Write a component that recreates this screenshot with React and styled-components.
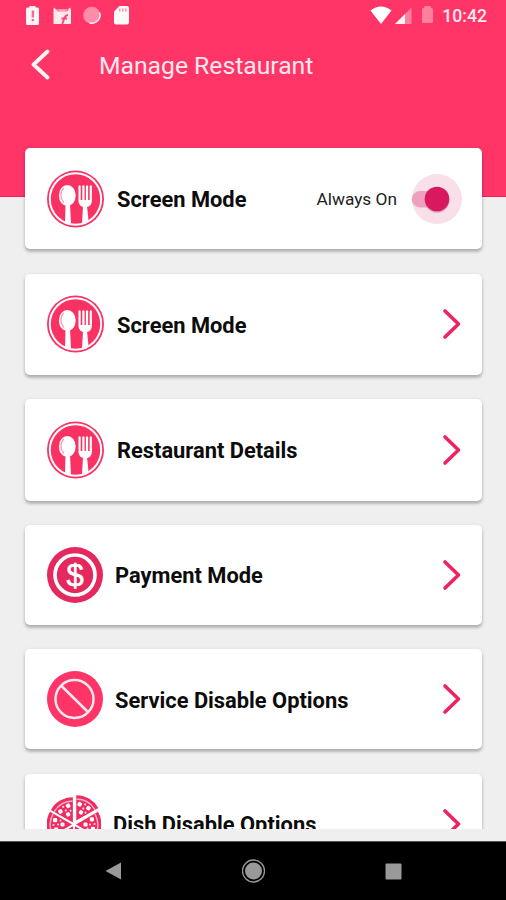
import React from "react";
import styled, { createGlobalStyle } from "styled-components";

let GlobalStyle = createGlobalStyle`
  * {
    box-sizing: border-box;
  }

  body {
    margin: 0;
    background: #efefef;
    font-family: Roboto, sans-serif;
  }

  svg {
    display: block;
    flex: none;
  }
`;

let Screen = styled.div`
  display: flex;
  flex-direction: column;
  height: 900px;
  overflow: hidden;
  background: #efefef;
`;

let Header = styled.header`
  flex: none;
  height: 197px;
  background: #ff3467;
  border-bottom: 1px solid #f21f58;
  color: #fff;
`;

let StatusBar = styled.div`
  display: flex;
  align-items: center;
  justify-content: space-between;
  height: 32px;
  padding: 0 19px 0 25px;
`;

let StatusGroup = styled.div`
  display: flex;
  align-items: center;
  gap: 6px;
`;

let Clock = styled.span`
  margin-left: 1px;
  font-size: 17.6px;
  font-weight: 500;
  line-height: 32px;
  color: #ffe9ef;
`;

let Toolbar = styled.div`
  display: flex;
  align-items: center;
  height: 66px;
  padding-left: 30px;
`;

let PageTitle = styled.h1`
  margin: 2px 0 0 48px;
  font-size: 24.7px;
  font-weight: 400;
  line-height: 30px;
  color: #ffe9ef;
`;

let List = styled.main`
  flex: none;
  height: 691px;
  margin-top: -59px;
  padding: 10px 24px 0 25px;
  overflow: hidden;
`;

let Card = styled.section`
  display: flex;
  align-items: center;
  height: ${p => p.$height}px;
  margin-bottom: 24.5px;
  padding: 0 20px 0 22px;
  border-radius: 5px;
  background: #fff;
  box-shadow: 0 3px 3px rgba(0, 0, 0, 0.2), 0 1px 4px rgba(0, 0, 0, 0.12);
`;

let Label = styled.h2`
  flex: 1;
  margin: 3px 0 0 12px;
  font-size: 21.85px;
  font-weight: 700;
  line-height: 28px;
  white-space: nowrap;
  color: #0c0c0c;
`;

let SwitchLabel = styled.span`
  margin: 1px 14px 0 0;
  font-size: 17.3px;
  line-height: 24px;
  color: #222;
`;

let NavBar = styled.nav`
  display: flex;
  align-items: center;
  justify-content: space-between;
  flex: none;
  height: 59px;
  margin-top: 12px;
  padding: 0 104px 0 105px;
  border-top: 1px solid #555;
  background: #000;
`;

function StatusIcons() {
  return (
    <svg width="106" height="22" viewBox="25 5 106 22">
      <path
        d="M29.5 7.5V6h6v1.500h2q1.500 0 1.500 1.500v14.500q0 1.500-1.500 1.500h-10q-1.500 0-1.500-1.500V9q0-1.500 1.500-1.500z"
        fill="#fff5f5"
      />
      <path d="M31.700 10.500h2.300v7h-2.300zM31.700 19h2.300v2.300h-2.300z" fill="#ff6689" />
      <path d="M54 7.500l2 2h12l2-2 1 2V24H53.500V9z" fill="#ffeaee" />
      <path
        d="M57 9q0 2 3 2h5q3 0 3-2"
        fill="none"
        stroke="#ff6f92"
        strokeWidth="1.200"
      />
      <path
        d="M62 24c2-2 1.500-9 6-9M61.500 18.500h5.500"
        fill="none"
        stroke="#ff4775"
        strokeWidth="2"
      />
      <circle cx="91.700" cy="15.200" r="8.500" fill="#ff8ca8" />
      <path
        d="M99.500 12.500a8 8 0 0 1-10 10.300"
        fill="none"
        stroke="#fff0f2"
        strokeWidth="1.500"
      />
      <path d="M119.500 6H127q2 0 2 2v14.500q0 2-2 2h-11q-2 0-2-2V11.500z" fill="#fffafa" />
      <path d="M119.800 8.500v3M122.800 8.500v3M125.800 8.500v3" stroke="#ff7d98" strokeWidth="1.300" />
    </svg>
  );
}

function SignalIcons() {
  return (
    <svg width="65" height="22" viewBox="371 5 65 22">
      <path d="M371.500 10.500Q382 2.500 392.500 10.500L382 24z" fill="#fff" />
      <path d="M412.500 7.500V24H396z" fill="#ff7f9e" />
      <path d="M406 14v10h-10z" fill="#fff3f0" />
      <path
        d="M425.500 7.500V6h6v1.500q2.500 0 2.500 2v12q0 1.500-1.500 1.500h-8q-1.500 0-1.500-1.500v-12q0-2 2.500-2z"
        fill="#ff819f"
      />
    </svg>
  );
}

function BackIcon() {
  return (
    <svg width="21" height="32" viewBox="30.500 49 21 32">
      <path
        d="M48 51.500L34 64.500L48 77.500"
        fill="none"
        stroke="#fff5f3"
        strokeWidth="3.800"
        strokeLinecap="round"
        strokeLinejoin="round"
      />
    </svg>
  );
}

function CutleryIcon() {
  return (
    <svg width="58" height="58" viewBox="0.500 0 58 58">
      <circle cx="29" cy="29" r="28.500" fill="#f93263" />
      <circle cx="29" cy="29" r="25.700" fill="none" stroke="#fff" strokeWidth="2" />
      <ellipse cx="20.800" cy="25.500" rx="8.400" ry="10.500" fill="#fff" />
      <path d="M19 34h4.500l1 19.500h-6zM36.500 36h4l1.500 14.500-6.500 3z" fill="#fff" />
      <path
        d="M32 16V31q0 5.500 6.700 6.500q6.700-1 6.700-6.500V16q-1.100-1.500-2.200 0V30h-1.600V16q-1.100-1.500-2.200 0V30h-1.400V16q-1.100-1.500-2.200 0V30h-1.600V16q-1.100-1.500-2.200 0z"
        fill="#fff"
      />
      <path d="M17.500 18q-3 2.500-3 7.500q0 4 3 7" fill="none" stroke="#ff9cb3" strokeWidth="1.300" />
    </svg>
  );
}

let DollarText = styled.text`
  font-family: "Liberation Sans", sans-serif;
  font-size: 31px;
  text-anchor: middle;
`;

function DollarIcon() {
  return (
    <svg width="56" height="56" viewBox="0 0 56 56">
      <circle cx="28" cy="28" r="28" fill="#e5285e" />
      <circle cx="28" cy="28" r="20" fill="none" stroke="#fff" strokeWidth="3.600" />
      <DollarText x="28" y="38.500" fill="#fff" stroke="#fff" strokeWidth="0.6">
        $
      </DollarText>
    </svg>
  );
}

function DisableIcon() {
  return (
    <svg width="56" height="56" viewBox="0 0 56 56">
      <circle cx="28" cy="28" r="28" fill="#ff3467" />
      <circle cx="27.500" cy="28" r="19" fill="none" stroke="#ffe9f0" strokeWidth="2.500" />
      <path d="M14.500 15L41 41" stroke="#ffe9f0" strokeWidth="2.500" />
    </svg>
  );
}

// each slice points right from the centre and is turned into place
function Slice(props) {
  return (
    <g transform={`rotate(${props.angle}) translate(${props.offset} 0)`}>
      <path d="M0 0L22 -12.700A25.400 25.400 0 0 1 22 12.700Z" fill="#ee2c62" />
      <path d="M18.900 -10.600A21.700 21.700 0 0 1 18.900 10.600" fill="none" stroke="#ffb3c6" strokeWidth="1.400" />
      <rect x="13.800" y="-7.300" width="4.200" height="4.200" rx="1.300" fill="#fff" />
      <rect x="14.800" y="2.200" width="4.200" height="4.200" rx="1.300" fill="#fff" />
      <rect x="7.500" y="-2" width="4" height="4" rx="1.300" fill="#fff" />
      <circle cx="14" cy="0" r="1.100" fill="#ffd2dd" />
      <circle cx="18.500" cy="-0.500" r="1.100" fill="#ffd2dd" />
      <circle cx="11.500" cy="4" r="1" fill="#ffd2dd" />
    </g>
  );
}

function PizzaIcon() {
  return (
    <svg width="54" height="58" viewBox="-27 -29.500 54 58">
      <Slice angle={-120} offset={2.2} />
      <Slice angle={-60} offset={4.5} />
      <Slice angle={0} offset={2} />
      <Slice angle={60} offset={2} />
      <Slice angle={120} offset={2} />
      <Slice angle={180} offset={2} />
    </svg>
  );
}

function Chevron() {
  return (
    <svg width="20" height="32" viewBox="0 0 20 32">
      <path
        d="M3 3L16.500 16L3 29"
        fill="none"
        stroke="#ee2361"
        strokeWidth="3.600"
        strokeLinecap="round"
        strokeLinejoin="round"
      />
    </svg>
  );
}

function Toggle() {
  return (
    <svg width="51" height="50" viewBox="0 0 51 50">
      <circle cx="26" cy="25" r="25" fill="#f8dfe9" />
      <path d="M26 17H9a8 8 0 0 0 0 16.500h17z" fill="#efa0bf" />
      <circle cx="26" cy="26.500" r="12.300" fill="#bd829a" opacity="0.55" />
      <circle cx="26" cy="25" r="12.300" fill="#d8195f" />
    </svg>
  );
}

let rows = [
  { label: "Screen Mode", icon: CutleryIcon, height: 101, toggle: "Always On" },
  { label: "Screen Mode", icon: CutleryIcon, height: 101 },
  { label: "Restaurant Details", icon: CutleryIcon, height: 101.5 },
  { label: "Payment Mode", icon: DollarIcon, height: 99.5 },
  { label: "Service Disable Options", icon: DisableIcon, height: 100 },
  { label: "Dish Disable Options", icon: PizzaIcon, height: 100 }
];

function MenuRow(props) {
  let Icon = props.icon;

  return (
    <Card $height={props.height}>
      <Icon />
      <Label>{props.label}</Label>
      {props.toggle && <SwitchLabel>{props.toggle}</SwitchLabel>}
      {props.toggle ? <Toggle /> : <Chevron />}
    </Card>
  );
}

function App() {
  return (
    <Screen>
      <GlobalStyle />
      <Header>
        <StatusBar>
          <StatusIcons />
          <StatusGroup>
            <SignalIcons />
            <Clock>10:42</Clock>
          </StatusGroup>
        </StatusBar>
        <Toolbar>
          <BackIcon />
          <PageTitle>Manage Restaurant</PageTitle>
        </Toolbar>
      </Header>
      <List>
        {rows.map((row, i) => (
          <MenuRow key={i} {...row} />
        ))}
      </List>
      <NavBar>
        <svg width="17" height="20" viewBox="0 0 17 20">
          <path d="M0.500 10L16 1.500V18.500Z" fill="#999" />
        </svg>
        <svg width="24" height="24" viewBox="0.500 0 24 24">
          <circle cx="12" cy="12" r="11" fill="none" stroke="#999" strokeWidth="1.300" />
          <circle cx="12" cy="12" r="8.500" fill="#999" />
        </svg>
        <svg width="17" height="17" viewBox="0 0 17 17">
          <rect x="0.500" y="0.500" width="16" height="16" rx="1" fill="#999" />
        </svg>
      </NavBar>
    </Screen>
  );
}

export default App;
